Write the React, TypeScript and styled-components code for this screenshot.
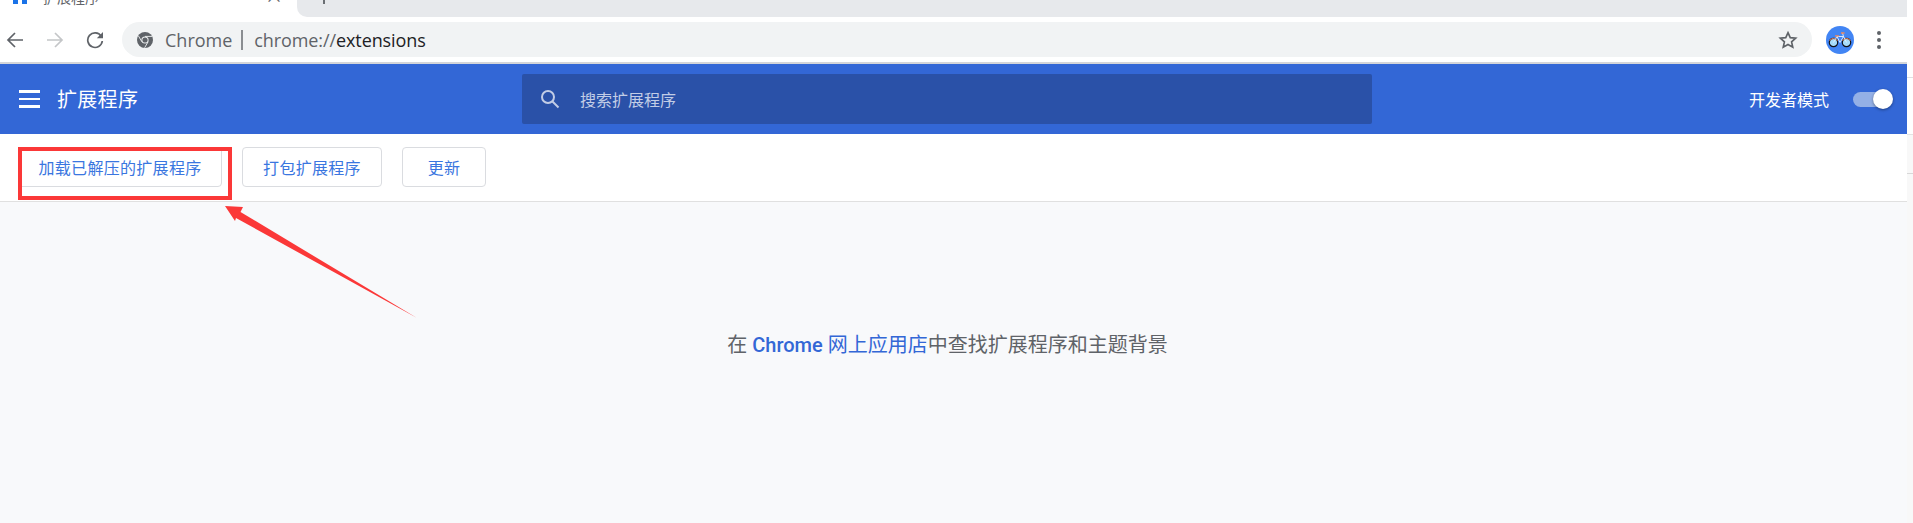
import styled, { createGlobalStyle } from 'styled-components';

const cjk = '"Noto Sans CJK SC", sans-serif';
const latin = 'Roboto, "Noto Sans CJK SC", sans-serif';

const GlobalStyle = createGlobalStyle`
  html, body {
    margin: 0;
    padding: 0;
    background: #fff;
    overflow: hidden;
  }
`;

const Page = styled.div`
  position: relative;
  display: flex;
  width: 1913px;
  height: 523px;
  overflow: hidden;
  font-family: ${cjk};
`;

const Browser = styled.div`
  display: flex;
  flex-direction: column;
  width: 1907px;
  height: 100%;
`;

const EdgeStrip = styled.div`
  display: flex;
  flex-direction: column;
  flex: 1;
`;

const EdgePiece = styled.div<{ $h: number; $bg: string; $line?: string }>`
  height: ${(p) => p.$h}px;
  background: ${(p) => p.$bg};
  border-bottom: 1px solid ${(p) => p.$line ?? 'transparent'};
`;

const TabStrip = styled.div`
  display: flex;
  height: 17px;
  background: #fff;
  overflow: hidden;
`;

const Tab = styled.div`
  display: flex;
  align-items: flex-end;
  width: 297px;
  height: 17px;
  padding: 0 0 13px 13px;
  box-sizing: border-box;
  color: #5f6368;
`;

const TabLabel = styled.span`
  flex: 1;
  margin-left: 16px;
  font-size: 14px;
  line-height: 14px;
`;

const TabClose = styled.span`
  margin-right: 14px;
  font-size: 18px;
  line-height: 18px;
  color: #5f6368;
`;

const NextTabs = styled.div`
  flex: 1;
  background: #e7e9ec;
  border-bottom-left-radius: 10px;
  padding-left: 26px;
`;

const TabMark = styled.div`
  width: 2px;
  height: 4px;
  background: #6b6f73;
`;

const Toolbar = styled.div`
  display: flex;
  align-items: center;
  height: 45px;
  box-sizing: border-box;
  padding: 0 0 0 6px;
  background: #fff;
`;

const NavIcon = styled.svg<{ $gap: number }>`
  flex: none;
  width: 18px;
  height: 18px;
  margin-right: ${(p) => p.$gap}px;
`;

const Omnibox = styled.div`
  display: flex;
  align-items: center;
  width: 1690px;
  height: 35px;
  padding: 0 14px 0 15px;
  box-sizing: border-box;
  background: #f1f3f4;
  border-radius: 18px;
  font-family: "Open Sans", sans-serif;
  font-size: 18px;
  color: #5f6368;
`;

const SiteName = styled.span`
  margin-left: 12px;
`;

const OmniDivider = styled.span`
  width: 2px;
  height: 20px;
  margin: 0 11px 0 9px;
  background: #8a8d91;
`;

const Url = styled.span`
  flex: 1;
  color: #202124;
  letter-spacing: -0.1px;
  & > em {
    font-style: normal;
    color: #5f6368;
  }
`;

const Avatar = styled.div`
  display: flex;
  align-items: center;
  justify-content: center;
  flex: none;
  width: 28px;
  height: 28px;
  margin-left: 14px;
  border-radius: 50%;
  background: #4285f4;
`;

const DotsIcon = styled.svg`
  flex: none;
  width: 6px;
  height: 22px;
  margin-left: 22px;
`;

const ToolbarRule = styled.div`
  height: 2px;
  background: #d3d5d9;
`;

const Header = styled.header`
  display: grid;
  grid-template-columns: 522px 850px 1fr;
  align-items: center;
  height: 70px;
  background: #3367d6;
  color: #fff;
`;

const HeaderLeft = styled.div`
  display: flex;
  align-items: center;
  padding-left: 19px;
`;

const Burger = styled.div`
  display: flex;
  flex-direction: column;
  gap: 5px;
  width: 21px;
  & > i {
    display: block;
    height: 2.5px;
    background: #fff;
  }
`;

const Title = styled.h1`
  margin: 0 0 0 17px;
  font-size: 20px;
  font-weight: 400;
  line-height: 28px;
  letter-spacing: 0.3px;
`;

const SearchBox = styled.div`
  display: flex;
  align-items: center;
  height: 50px;
  padding-left: 17px;
  border-radius: 2px;
  background: #2a51a8;
  color: #c2cde6;
  font-size: 16px;
`;

const SearchLabel = styled.span`
  margin-left: 19px;
`;

const DevMode = styled.div`
  display: flex;
  align-items: center;
  justify-content: flex-end;
  padding-right: 17px;
  font-size: 16px;
`;

const Toggle = styled.div`
  position: relative;
  width: 37px;
  height: 15px;
  margin-left: 24px;
  border-radius: 8px;
  background: #94b0e6;
`;

const ToggleKnob = styled.span`
  position: absolute;
  top: -3px;
  right: -3px;
  width: 20px;
  height: 20px;
  border-radius: 50%;
  background: #fff;
  box-shadow: 0 1px 3px rgba(0, 0, 0, 0.4);
`;

const ActionBar = styled.div`
  display: flex;
  align-items: flex-start;
  gap: 20px;
  height: 68px;
  box-sizing: border-box;
  padding: 13px 0 0 18px;
  background: #fff;
  border-bottom: 1px solid #e0e0e0;
`;

const ActionButton = styled.button<{ $w: number }>`
  width: ${(p) => p.$w}px;
  height: 40px;
  padding: 0;
  background: #fff;
  border: 1px solid #dadce0;
  border-radius: 4px;
  color: #3a76e0;
  font-family: ${cjk};
  font-size: 16px;
  letter-spacing: 0.3px;
`;

const Content = styled.main`
  flex: 1;
  display: flex;
  justify-content: center;
  padding: 127px 0 0;
  background: #f8f9fb;
  color: #5f6368;
  font-size: 20px;
  line-height: 32px;
`;

const Message = styled.p`
  margin: 0;
  padding-right: 12px;
  font-family: ${latin};
`;

const StoreLink = styled.a`
  color: #3367d6;
  & > b {
    font-weight: 500;
  }
`;

const Highlight = styled.div`
  position: absolute;
  left: 18px;
  top: 147px;
  width: 214px;
  height: 53px;
  box-sizing: border-box;
  border: 4px solid #fb3838;
`;

const ArrowOverlay = styled.svg`
  position: absolute;
  left: 220px;
  top: 200px;
  width: 205px;
  height: 125px;
`;

export default function App() {
  return (
    <Page>
      <GlobalStyle />
      <Browser>
        <TabStrip>
          <Tab>
            <svg width="14" height="16" viewBox="0 0 14 16" style={{ flex: 'none' }}>
              <path d="M7 0 14 6v10H9v-5H5v5H0V6z" fill="#1a73e8" />
            </svg>
            <TabLabel>扩展程序</TabLabel>
            <TabClose>×</TabClose>
          </Tab>
          <NextTabs>
            <TabMark />
          </NextTabs>
        </TabStrip>
        <Toolbar>
          <NavIcon $gap={22} viewBox="0 0 18 18">
            <path d="M17 9H2M9 2 2 9l7 7" fill="none" stroke="#5f6368" strokeWidth="1.7" />
          </NavIcon>
          <NavIcon $gap={22} viewBox="0 0 18 18">
            <path d="M1 9h15M9 2l7 7-7 7" fill="none" stroke="#c4c6c8" strokeWidth="1.7" />
          </NavIcon>
          <NavIcon $gap={18} viewBox="0 0 18 18">
            <path d="M15.2 5.2A7.3 7.3 0 1 0 16.3 10" fill="none" stroke="#5f6368" strokeWidth="1.7" />
            <path d="M17 1v6.2h-6.2z" fill="#5f6368" />
          </NavIcon>
          <Omnibox>
            <svg width="16" height="16" viewBox="0 0 16 16" style={{ flex: 'none' }}>
              <circle cx="8" cy="8" r="8" fill="#5f6368" />
              <circle cx="8" cy="8" r="3.6" fill="#f1f3f4" />
              <circle cx="8" cy="8" r="2.6" fill="#5f6368" />
              <path d="M8 4.4h7M4.9 9.8 1.5 4M11.1 9.8 7.6 15.8" stroke="#f1f3f4" strokeWidth="0.9" fill="none" />
            </svg>
            <SiteName>Chrome</SiteName>
            <OmniDivider />
            <Url><em>chrome://</em>extensions</Url>
            <svg width="20" height="20" viewBox="0 0 24 24" style={{ flex: 'none' }}>
              <path d="M12 3.2l2.7 6 6.5.7-4.9 4.3 1.4 6.4L12 17.3l-5.7 3.3 1.4-6.4-4.9-4.3 6.5-.7z" fill="none" stroke="#5f6368" strokeWidth="2" strokeLinejoin="miter" />
            </svg>
          </Omnibox>
          <Avatar>
            <svg width="24" height="17" viewBox="0 0 24 17">
              <circle cx="5.5" cy="11.5" r="4.2" fill="#a6dcfa" stroke="#10131a" strokeWidth="1.2" />
              <circle cx="18.5" cy="11.5" r="4.2" fill="#a6dcfa" stroke="#10131a" strokeWidth="1.2" />
              <path d="M1.6 9.8A4.4 4.4 0 0 1 9.4 9.8M14.6 9.8A4.4 4.4 0 0 1 22.4 9.8" fill="none" stroke="#f0875a" strokeWidth="1" />
              <path d="M5.5 11.5 9 5.5h6.5l3 6M9 5.5l3 6 3.5-6M15.5 5.5 14.5 2" fill="none" stroke="#e4f1fc" strokeWidth="0.9" />
              <path d="M7 4.8h4M13 2h3.5" stroke="#f0875a" strokeWidth="1.3" />
            </svg>
          </Avatar>
          <DotsIcon viewBox="0 0 6 22">
            <circle cx="3" cy="4" r="2" fill="#5f6368" />
            <circle cx="3" cy="11" r="2" fill="#5f6368" />
            <circle cx="3" cy="18" r="2" fill="#5f6368" />
          </DotsIcon>
        </Toolbar>
        <ToolbarRule />
        <Header>
          <HeaderLeft>
            <Burger>
              <i />
              <i />
              <i />
            </Burger>
            <Title>扩展程序</Title>
          </HeaderLeft>
          <SearchBox>
            <svg width="22" height="22" viewBox="0 0 22 22" style={{ flex: 'none' }}>
              <circle cx="9" cy="9" r="6" fill="none" stroke="#c2cde6" strokeWidth="2" />
              <path d="M13.5 13.5 19.5 19.5" stroke="#c2cde6" strokeWidth="2" />
            </svg>
            <SearchLabel>搜索扩展程序</SearchLabel>
          </SearchBox>
          <DevMode>
            开发者模式
            <Toggle>
              <ToggleKnob />
            </Toggle>
          </DevMode>
        </Header>
        <ActionBar>
          <ActionButton $w={204}>加载已解压的扩展程序</ActionButton>
          <ActionButton $w={140}>打包扩展程序</ActionButton>
          <ActionButton $w={84}>更新</ActionButton>
        </ActionBar>
        <Content>
          <Message>
            在 <StoreLink><b>Chrome</b> 网上应用店</StoreLink>中查找扩展程序和主题背景
          </Message>
        </Content>
      </Browser>
      <EdgeStrip>
        <EdgePiece $h={77} $bg="#fff" $line="#dfe1e3" />
        <EdgePiece $h={56} $bg="#fff" $line="#e3e3e3" />
        <EdgePiece $h={38} $bg="#f8f8f8" $line="#d8d8d8" />
        <EdgePiece $h={349} $bg="#f8f8f8" />
      </EdgeStrip>
      <Highlight />
      <ArrowOverlay viewBox="220 200 205 125">
        <path d="M225 206 243 207 240.5 212 417 318 236 218 235 221z" fill="#fb3838" />
      </ArrowOverlay>
    </Page>
  );
}
